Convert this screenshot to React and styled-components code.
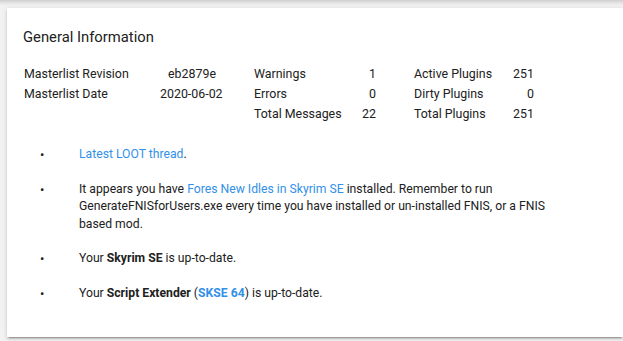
import React from 'react'
import styled, { createGlobalStyle } from 'styled-components'

const GlobalStyle = createGlobalStyle`
  html, body {
    margin: 0;
    padding: 0;
    background: #f2f2f2;
    overflow: hidden;
  }
  body {
    font-family: Roboto, "Liberation Sans", sans-serif;
    color: #212121;
  }
`

const Page = styled.div`
  width: 623px;
  height: 341px;
  display: flex;
  flex-direction: column;
`

const PrevEdge = styled.div`
  height: 6px;
  background: linear-gradient(#cfcfcf, #ececec 70%, #f2f2f2);
`

const Card = styled.section`
  margin: 2px 0 0 7px;
  width: 616px;
  height: 329px;
  box-sizing: border-box;
  background: #fff;
  padding: 18px 16px 16px;
  box-shadow: 0 2px 2px rgba(0, 0, 0, 0.14), 0 1px 5px rgba(0, 0, 0, 0.12),
    0 3px 1px -2px rgba(0, 0, 0, 0.2);
`

const Title = styled.h2`
  margin: 0;
  font-size: 14.8px;
  font-weight: 400;
  line-height: 22px;
  color: #212121;
`

const Stats = styled.div`
  display: flex;
  gap: 38px;
  margin: 16px 0 0 1px;
`

const StatGroup = styled.div`
  display: grid;
  grid-template-columns: ${p => p.$label}px ${p => p.$value}px;
  grid-auto-rows: 20px;
  font-size: 12.4px;
  line-height: 20px;
`

const Label = styled.span`
  white-space: nowrap;
`

const Value = styled.span`
  text-align: right;
  white-space: nowrap;
`

const Notes = styled.ul`
  list-style: none;
  margin: 22px 0 0 0;
  padding: 0 0 0 17px;
  font-size: 12.2px;
  line-height: 17.7px;
`

const Note = styled.li`
  display: flex;
  margin-bottom: 16.8px;
`

const Bullet = styled.span`
  flex: 0 0 39px;
  font-size: 13px;
`

const NoteText = styled.span`
  max-width: 480px;
`

const Link = styled.a`
  color: #3290e8;
  text-decoration: none;
  font-weight: ${p => (p.$bold ? 700 : 400)};
`

const stats = [
  {
    label: 136,
    value: 56,
    rows: [
      ['Masterlist Revision', 'eb2879e'],
      ['Masterlist Date', '2020-06-02'],
    ],
  },
  {
    label: 102,
    value: 20,
    rows: [
      ['Warnings', '1'],
      ['Errors', '0'],
      ['Total Messages', '22'],
    ],
  },
  {
    label: 95,
    value: 25,
    rows: [
      ['Active Plugins', '251'],
      ['Dirty Plugins', '0'],
      ['Total Plugins', '251'],
    ],
  },
]

const App = () => (
  <Page>
    <GlobalStyle />
    <PrevEdge />
    <Card>
      <Title>General Information</Title>
      <Stats>
        {stats.map((g, i) => (
          <StatGroup key={i} $label={g.label} $value={g.value}>
            {g.rows.map(([l, v]) => (
              <React.Fragment key={l}>
                <Label>{l}</Label>
                <Value>{v}</Value>
              </React.Fragment>
            ))}
          </StatGroup>
        ))}
      </Stats>
      <Notes>
        <Note>
          <Bullet>•</Bullet>
          <NoteText>
            <Link href="#">Latest LOOT thread</Link>.
          </NoteText>
        </Note>
        <Note>
          <Bullet>•</Bullet>
          <NoteText>
            It appears you have <Link href="#">Fores New Idles in Skyrim SE</Link> installed.
            Remember to run GenerateFNISforUsers.exe every time you have installed or
            un-installed FNIS, or a FNIS based mod.
          </NoteText>
        </Note>
        <Note>
          <Bullet>•</Bullet>
          <NoteText>
            Your <b>Skyrim SE</b> is up-to-date.
          </NoteText>
        </Note>
        <Note>
          <Bullet>•</Bullet>
          <NoteText>
            Your <b>Script Extender</b> (<Link href="#" $bold>SKSE 64</Link>) is up-to-date.
          </NoteText>
        </Note>
      </Notes>
    </Card>
  </Page>
)

export default App
